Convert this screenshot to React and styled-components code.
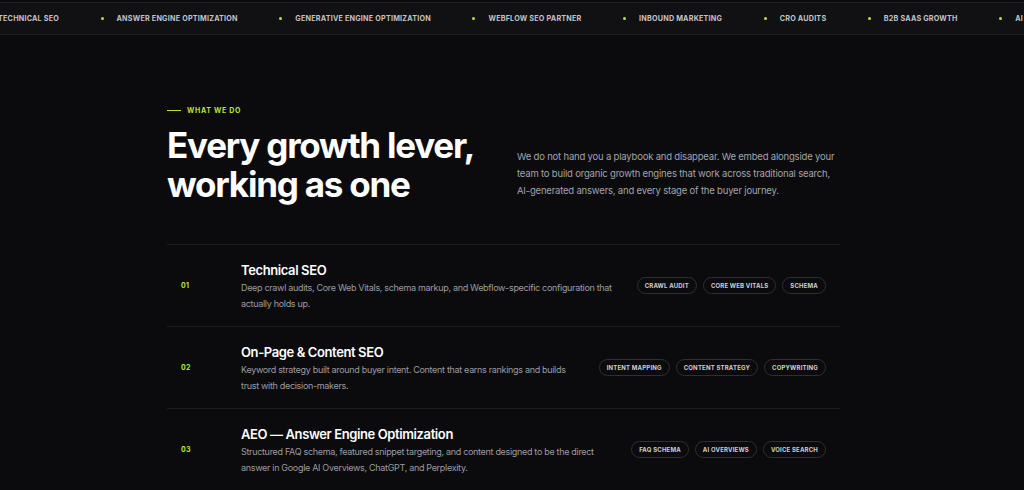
import React from "react";
import styled, { createGlobalStyle } from "styled-components";

const Global = createGlobalStyle`
  html, body { margin: 0; padding: 0; background: #0b0b0d; }
  body { font-family: Inter, "Noto Sans", sans-serif; color: #fff; overflow: hidden; }
  * { box-sizing: border-box; }
`;

const LIME = "#b9e62b";

const Page = styled.div`
  width: 1024px;
  min-height: 490px;
  background: #0b0b0d;
  padding-top: 2px;
`;

const Ticker = styled.div`
  height: 33px;
  background: #111114;
  border-top: 1px solid #1f1f23;
  border-bottom: 1px solid #1f1f23;
  overflow: hidden;
  display: flex;
  align-items: center;
`;

const Track = styled.div`
  display: flex;
  align-items: center;
  white-space: nowrap;
  margin-left: -2px;
`;

const TickItem = styled.span`
  display: inline-flex;
  align-items: center;
  font-size: 7.2px;
  font-weight: 700;
  letter-spacing: 0.03em;
  text-transform: uppercase;
  color: #c3c3c8;
  margin-right: 41.5px;
`;

const Dot = styled.span`
  width: 3px;
  height: 3px;
  border-radius: 50%;
  background: ${LIME};
  margin-right: 13px;
  flex: none;
`;

const Section = styled.section`
  width: 673px;
  margin-left: 167px;
  padding-top: 71px;
`;

const Header = styled.div`
  display: flex;
  justify-content: space-between;
  align-items: flex-end;
  padding-bottom: 40px;
  border-bottom: 1px solid #1d1d21;
`;

const Eyebrow = styled.div`
  display: flex;
  align-items: center;
  gap: 6px;
  font-size: 7px;
  font-weight: 700;
  letter-spacing: 0.1em;
  color: ${LIME};
  text-transform: uppercase;
  margin-bottom: 11px;
  &::before {
    content: "";
    width: 14px;
    height: 1px;
    background: ${LIME};
  }
`;

const Headline = styled.h2`
  margin: 0;
  font-size: 35px;
  line-height: 39px;
  font-weight: 700;
  letter-spacing: -0.035em;
  color: #fff;
`;

const Lead = styled.p`
  margin: 0 2px 5px 0;
  width: 321px;
  font-size: 9.5px;
  line-height: 17px;
  color: #a3a3aa;
  letter-spacing: -0.02em;
`;

const Row = styled.div`
  display: grid;
  grid-template-columns: 40px 1fr auto;
  column-gap: 20px;
  align-items: center;
  height: 82px;
  padding: 0 14px;
  border-bottom: 1px solid #1d1d21;
`;

const Num = styled.span`
  font-size: 7px;
  font-weight: 700;
  color: ${LIME};
  letter-spacing: 0.04em;
`;

const Body = styled.div`
  padding-top: 2px;
`;

const Title = styled.h3`
  margin: 0 0 1px;
  font-size: 13px;
  line-height: 17px;
  font-weight: 600;
  letter-spacing: -0.03em;
  color: #fff;
`;

const Desc = styled.p`
  margin: 0;
  font-size: 9px;
  line-height: 16px;
  color: #9b9ba2;
  letter-spacing: -0.035em;
`;

const Tags = styled.div`
  display: flex;
  gap: 6px;
`;

const Tag = styled.span`
  display: inline-flex;
  align-items: center;
  height: 17px;
  padding: 0 7px;
  border: 1px solid #2f2f34;
  border-radius: 999px;
  font-size: 6px;
  font-weight: 700;
  letter-spacing: 0.03em;
  text-transform: uppercase;
  color: #cfcfd4;
  white-space: nowrap;
`;

const ticker = [
  "Technical SEO",
  "Answer Engine Optimization",
  "Generative Engine Optimization",
  "Webflow SEO Partner",
  "Inbound Marketing",
  "CRO Audits",
  "B2B SaaS Growth",
  "AI Search Visibility",
];

const services = [
  {
    n: "01",
    title: "Technical SEO",
    desc: "Deep crawl audits, Core Web Vitals, schema markup, and Webflow-specific configuration that actually holds up.",
    tags: ["Crawl Audit", "Core Web Vitals", "Schema"],
  },
  {
    n: "02",
    title: "On-Page & Content SEO",
    desc: "Keyword strategy built around buyer intent. Content that earns rankings and builds trust with decision-makers.",
    tags: ["Intent Mapping", "Content Strategy", "Copywriting"],
  },
  {
    n: "03",
    title: "AEO — Answer Engine Optimization",
    desc: "Structured FAQ schema, featured snippet targeting, and content designed to be the direct answer in Google AI Overviews, ChatGPT, and Perplexity.",
    tags: ["FAQ Schema", "AI Overviews", "Voice Search"],
  },
];

export default function App() {
  return (
    <Page>
      <Global />
      <Ticker>
        <Track>
          {ticker.map((t, i) => (
            <TickItem key={t}>
              {i > 0 && <Dot />}
              {t}
            </TickItem>
          ))}
        </Track>
      </Ticker>
      <Section>
        <Header>
          <div>
            <Eyebrow>What we do</Eyebrow>
            <Headline>
              Every growth lever,
              <br />
              working as one
            </Headline>
          </div>
          <Lead>
            We do not hand you a playbook and disappear. We embed alongside your
            team to build organic growth engines that work across traditional
            search, AI-generated answers, and every stage of the buyer journey.
          </Lead>
        </Header>
        {services.map((s) => (
          <Row key={s.n}>
            <Num>{s.n}</Num>
            <Body>
              <Title>{s.title}</Title>
              <Desc>{s.desc}</Desc>
            </Body>
            <Tags>
              {s.tags.map((t) => (
                <Tag key={t}>{t}</Tag>
              ))}
            </Tags>
          </Row>
        ))}
      </Section>
    </Page>
  );
}
